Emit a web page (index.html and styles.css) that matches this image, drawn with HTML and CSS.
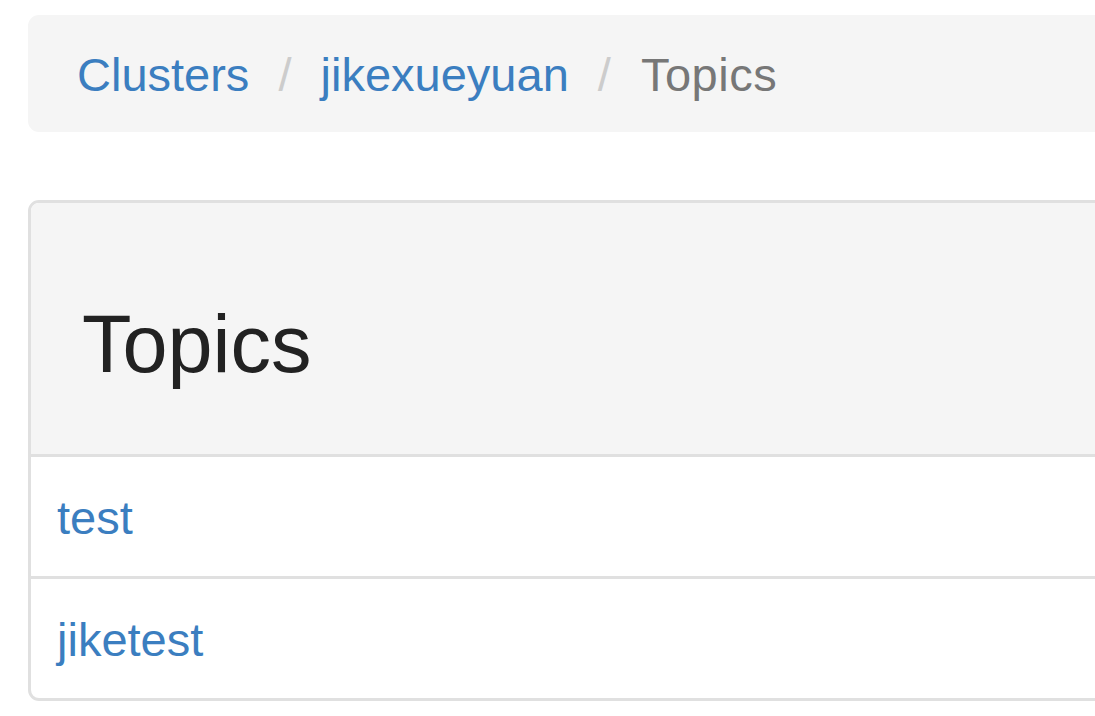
FILE: index.html
```html
<!DOCTYPE html>
<html>
<head>
<meta charset="utf-8">
<title>Topics</title>
<link rel="stylesheet" href="styles.css">
</head>
<body>
<div class="page">
  <ol class="breadcrumb">
    <li><a href="#">Clusters</a></li>
    <li><a href="#">jikexueyuan</a></li>
    <li class="active">Topics</li>
  </ol>
  <div class="panel">
    <div class="panel-heading">
      <h3 class="panel-title">Topics</h3>
    </div>
    <table class="table">
      <tbody>
        <tr><td><a href="#">test</a></td></tr>
        <tr><td><a href="#">jiketest</a></td></tr>
      </tbody>
    </table>
  </div>
</div>
</body>
</html>
```

FILE: styles.css
```css
html, body {
  margin: 0;
  padding: 0;
  background: #fff;
  overflow: hidden;
}
body {
  font-family: "Liberation Sans", Arial, sans-serif;
  font-size: 47px;
  line-height: 65px;
  color: #333;
}
.page {
  width: 1300px;
  padding: 15px 0 0 28px;
}
a {
  color: #3b7ec0;
  text-decoration: none;
}
.breadcrumb {
  list-style: none;
  margin: 0 0 68px 0;
  padding: 27px 49px 25px 49px;
  background: #f5f5f5;
  border-radius: 11px;
}
.breadcrumb li {
  display: inline-block;
}
.breadcrumb li + li::before {
  content: "/\00a0";
  padding: 0 16px;
  color: #ccc;
}
.breadcrumb .active {
  color: #777;
  letter-spacing: 0.5px;
}
.panel {
  border: 3px solid #e0e0e0;
  border-radius: 11px;
  background: #fff;
  overflow: hidden;
}
.panel-heading {
  background: #f5f5f5;
  padding: 33px 49px 33px 51px;
  border-bottom: 3px solid #e0e0e0;
}
.panel-title {
  margin: 65px 0 33px 0;
  font-size: 81px;
  line-height: 87px;
  font-weight: 400;
  color: #222;
}
.table {
  width: 100%;
  border-collapse: collapse;
}
.table td {
  padding: 28px 26px 26px 26px;
  line-height: 65px;
}
.table tr + tr td {
  border-top: 3px solid #e0e0e0;
}
```
